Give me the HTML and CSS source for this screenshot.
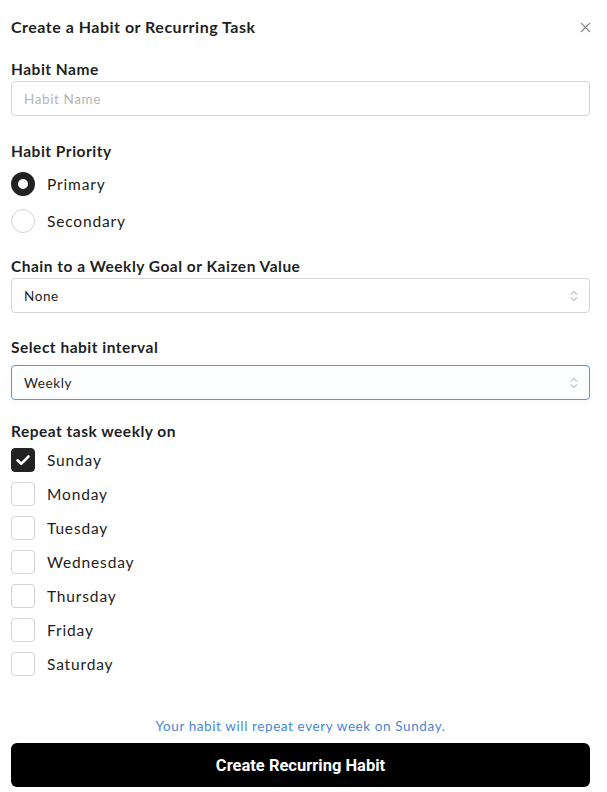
FILE: index.html
```html
<!DOCTYPE html>
<html lang="en">
<head>
  <meta charset="UTF-8">
  <title>Create a Habit</title>
  <link rel="stylesheet" href="styles.css">
</head>
<body>

  <div class="modal">
    <div class="modal-header">
      <h2>Create a Habit or Recurring Task</h2>
      <button class="close" type="button" aria-label="Close">
        <svg width="11" height="11" viewBox="0 0 11 11"><path d="M1 1L10 10M10 1L1 10" stroke="#8a8a8a" stroke-width="1.2" fill="none"/></svg>
      </button>
    </div>

    <form id="habitForm">
      <label class="field-label first">Habit Name</label>
      <input class="text-input" type="text" name="habit_name" placeholder="Habit Name">

      <label class="field-label priority">Habit Priority</label>
      <div class="options radios">
        <label class="option"><input type="radio" name="priority" value="primary" checked><span>Primary</span></label>
        <label class="option"><input type="radio" name="priority" value="secondary"><span>Secondary</span></label>
      </div>

      <label class="field-label chain">Chain to a Weekly Goal or Kaizen Value</label>
      <div class="select">None</div>

      <label class="field-label interval">Select habit interval</label>
      <div class="select focused">Weekly</div>

      <label class="field-label repeat">Repeat task weekly on</label>
      <div class="options checks">
        <label class="option"><input type="checkbox" name="day" value="sun" checked><span>Sunday</span></label>
        <label class="option"><input type="checkbox" name="day" value="mon"><span>Monday</span></label>
        <label class="option"><input type="checkbox" name="day" value="tue"><span>Tuesday</span></label>
        <label class="option"><input type="checkbox" name="day" value="wed"><span>Wednesday</span></label>
        <label class="option"><input type="checkbox" name="day" value="thu"><span>Thursday</span></label>
        <label class="option"><input type="checkbox" name="day" value="fri"><span>Friday</span></label>
        <label class="option"><input type="checkbox" name="day" value="sat"><span>Saturday</span></label>
      </div>

      <p class="hint">Your habit will repeat every week on Sunday.</p>
      <button class="submit" type="submit">Create Recurring Habit</button>
    </form>
  </div>

</body>
</html>
```

FILE: styles.css
```css
* {
  box-sizing: border-box;
  font-family: 'Lato', 'Noto Sans', sans-serif;
}

body {
  background-color: #fff;
  margin: 0;
  padding: 0;
  color: #1c1c1c;
}

.modal {
  padding: 16px 17px 0 11px;
}

.modal-header {
  display: flex;
  align-items: center;
  justify-content: space-between;
}

h2 {
  margin: 0;
  font-size: 16px;
  line-height: 22px;
  font-weight: 700;
  letter-spacing: 0.5px;
  color: #1f1f1f;
}

.close {
  background: none;
  border: none;
  padding: 0;
  margin-right: -1px;
  width: 11px;
  height: 11px;
  display: flex;
  cursor: pointer;
}

form {
  display: flex;
  flex-direction: column;
}

.field-label {
  display: block;
  font-size: 15.5px;
  line-height: 20px;
  font-weight: 700;
  letter-spacing: 0.5px;
  color: #1f1f1f;
}

.field-label.first { margin-top: 21px; margin-bottom: 2px; }
.field-label.priority { margin-top: 25px; margin-bottom: 11px; }
.field-label.chain { margin-top: 23px; margin-bottom: 2px; }
.field-label.interval { margin-top: 24px; margin-bottom: 8px; }
.field-label.repeat { margin-top: 21px; margin-bottom: 7px; }

.text-input {
  width: 100%;
  height: 35px;
  padding: 0 12px;
  border: 1px solid #d4d4d5;
  border-radius: 4px;
  font-size: 13.5px;
  letter-spacing: 0.6px;
  color: #222;
  outline: none;
}

.text-input::placeholder {
  color: #b5b5b5;
}

.select {
  position: relative;
  height: 35px;
  padding: 0 12px;
  border: 1px solid #d4d4d5;
  border-radius: 4px;
  font-size: 13.5px;
  letter-spacing: 0.6px;
  display: flex;
  align-items: center;
  color: #1c1c1c;
}

.select::after {
  content: "";
  position: absolute;
  right: 11px;
  top: 11px;
  width: 8px;
  height: 12px;
  background:
    url("data:image/svg+xml;utf8,<svg xmlns='http://www.w3.org/2000/svg' width='8' height='12' viewBox='0 0 8 12'><path d='M1 4.5L4 1.5L7 4.5M1 7.5L4 10.5L7 7.5' stroke='%23999' stroke-width='1' fill='none'/></svg>") no-repeat;
}

.select.focused {
  border-color: #5b95d4;
  background-color: #fcfeff;
  box-shadow: 0 1px 12px rgba(0, 0, 0, 0.03);
}

.options {
  display: flex;
  flex-direction: column;
}

.radios { gap: 13px; }
.checks { gap: 10px; }

.option {
  display: flex;
  align-items: center;
  gap: 12px;
  height: 24px;
  font-size: 15.5px;
  letter-spacing: 0.85px;
  color: #1c1c1c;
}

.option input {
  appearance: none;
  -webkit-appearance: none;
  margin: 0;
  width: 24px;
  height: 24px;
  flex-shrink: 0;
  border: 1px solid #d4d4d5;
  background: #fff;
}

.option input[type="radio"] {
  border-radius: 50%;
}

.option input[type="radio"]:checked {
  border: 7px solid #222;
  background: #fff;
}

.option input[type="checkbox"] {
  border-radius: 4px;
}

.option input[type="checkbox"]:checked {
  border-color: #222;
  background: #222 url("data:image/svg+xml;utf8,<svg xmlns='http://www.w3.org/2000/svg' width='24' height='24' viewBox='0 0 24 24'><path d='M6.5 12.3L10.2 15.8L17.5 8.5' stroke='white' stroke-width='2.6' fill='none' stroke-linecap='round' stroke-linejoin='round'/></svg>") center / 24px 24px no-repeat;
}

.hint {
  margin: 41px 0 8px;
  text-align: center;
  font-size: 13.5px;
  line-height: 18px;
  letter-spacing: 0.6px;
  color: #4a86d4;
}

.submit {
  width: 100%;
  height: 44px;
  background-color: #000;
  color: #fff;
  border: none;
  border-radius: 6px;
  font-family: 'Roboto', 'Liberation Sans', sans-serif;
  font-size: 16.5px;
  font-weight: 700;
  cursor: pointer;
}
```
